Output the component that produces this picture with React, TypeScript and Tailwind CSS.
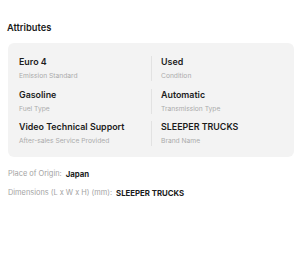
const attributes = [
  { value: "Euro 4", label: "Emission Standard" },
  { value: "Used", label: "Condition" },
  { value: "Gasoline", label: "Fuel Type" },
  { value: "Automatic", label: "Transmission Type" },
  { value: "Video Technical Support", label: "After-sales Service Provided" },
  { value: "SLEEPER TRUCKS", label: "Brand Name" },
];

const extras = [
  { label: "Place of Origin:", value: "Japan" },
  { label: "Dimensions (L x W x H) (mm):", value: "SLEEPER TRUCKS" },
];

export default function App() {
  return (
    <div className="w-[300px] h-[270px] bg-white px-[7px] pt-[21px] font-['Inter',sans-serif] text-[#1c1c1c]">
      {/* Section title */}
      <h2 className="text-[9.3px] leading-[14px] font-semibold">Attributes</h2>

      {/* Key attributes card */}
      <div className="mt-[8px] ml-[1px] w-[286px] rounded-[6px] bg-[#f3f3f3] px-[11px] pt-[13px] pb-[11px]">
        <div className="grid grid-cols-2 gap-y-[7.5px]">
          {attributes.map((item, i) => (
            <div
              key={item.label}
              className={i % 2 === 1 ? "border-l border-[#e2e2e2] pl-[9px]" : ""}
            >
              <div className="text-[8.9px] leading-[12px] font-semibold">{item.value}</div>
              <div className="mt-[3px] text-[6.7px] leading-[10px] text-[#ababab]">{item.label}</div>
            </div>
          ))}
        </div>
      </div>

      {/* Other attributes */}
      <div className="mt-[12px] ml-[1px] flex flex-col gap-[9px]">
        {extras.map((row) => (
          <div key={row.label} className="flex items-center gap-[4px] leading-[10px]">
            <span className="text-[7.4px] text-[#a3a3a3]">{row.label}</span>
            <span className="text-[7.8px] font-bold">{row.value}</span>
          </div>
        ))}
      </div>
    </div>
  );
}
